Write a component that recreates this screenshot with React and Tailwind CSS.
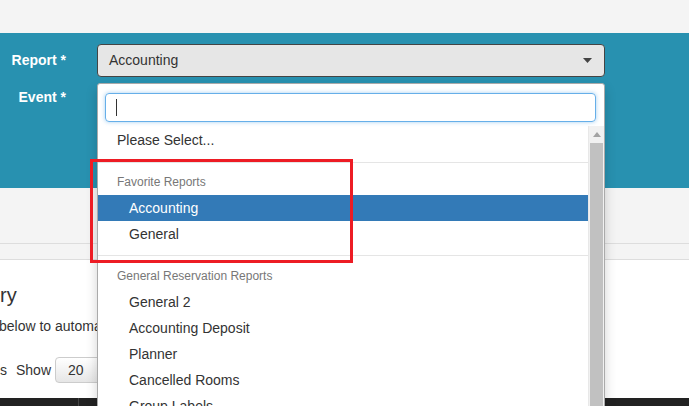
import React from 'react';

const FAVORITES = ['Accounting', 'General'];
const GENERAL = ['General 2', 'Accounting Deposit', 'Planner', 'Cancelled Rooms', 'Group Labels'];

function Caret({ className }) {
  return (
    <svg width="9" height="5" viewBox="0 0 9 5" className={className}>
      <path d="M0 0h9L4.5 5z" fill="currentColor" />
    </svg>
  );
}

function Dropdown() {
  return (
    <div className="absolute left-[97px] top-[83px] w-[508px] h-[340px] bg-white border border-[#aaa] rounded-t-[3px] shadow-[0_6px_12px_rgba(0,0,0,0.18)] flex flex-col">
      <div className="pt-[9px] pl-[7px] pr-[8px]">
        <div className="h-[29px] rounded-[4px] border border-[#66afe9] shadow-[0_0_4px_rgba(102,175,233,0.6)] flex items-center pl-[10px]">
          <span className="w-px h-[17px] bg-[#333]" />
        </div>
      </div>
      <div className="mt-[4px] flex flex-1 min-h-0">
        <ul className="flex-1 overflow-hidden pt-[1px]">
          <li className="h-[26px] leading-[26px] pl-[19px] mb-[9px]">Please Select...</li>
          <li className="border-t border-[#e5e5e5] pt-[7px] pb-[8px]">
            <div className="h-[25px] leading-[25px] pl-[19px] text-[12px] text-[#777]">Favorite Reports</div>
            {FAVORITES.map((r, i) => (
              <div
                key={r}
                className={`h-[26px] leading-[26px] pl-[31px] ${i === 0 ? 'bg-[#337ab7] text-white' : ''}`}
              >
                {r}
              </div>
            ))}
          </li>
          <li className="border-t border-[#e5e5e5] pt-[8px]">
            <div className="h-[25px] leading-[25px] pl-[19px] text-[12px] text-[#777]">General Reservation Reports</div>
            {GENERAL.map((r) => (
              <div key={r} className="h-[26px] leading-[26px] pl-[31px]">{r}</div>
            ))}
          </li>
        </ul>
        <div className="w-[16px] bg-[#f1f1f1] flex flex-col items-center border-l border-[#e8e8e8]">
          <div className="h-[17px] flex items-center justify-center">
            <svg width="8" height="5" viewBox="0 0 8 5"><path d="M4 0l4 5H0z" fill="#a3a3a3" /></svg>
          </div>
          <div className="w-[13px] flex-1 bg-[#c1c1c1]" />
        </div>
      </div>
    </div>
  );
}

export default function App() {
  return (
    <div className="relative w-[689px] h-[406px] overflow-hidden bg-white font-['Liberation_Sans',Arial,sans-serif] text-[14px] text-[#333]">
      <div className="h-[33px] bg-[#f4f4f4]" />

      <div className="h-[155px] bg-[#2891b0] pt-[11px]">
        <div className="flex items-center">
          <label className="w-[66px] text-right font-bold text-white">Report *</label>
          <div className="ml-[31px] w-[508px] h-[33px] rounded-[4px] border border-[#444] bg-[#e6e6e6] flex items-center justify-between pl-[11px] pr-[12px]">
            <span>Accounting</span>
            <Caret className="text-[#444]" />
          </div>
        </div>
        <div className="flex mt-[10px]">
          <label className="w-[66px] text-right font-bold text-white leading-[20px]">Event *</label>
        </div>
      </div>

      <div className="h-[55px] bg-[#f4f4f4]" />
      <div className="h-[17px] bg-[#f4f4f4] border-t border-[#2e8bab] border-b border-[#ddd]" />

      <div className="h-[138px] pt-[23px] whitespace-nowrap">
        <div className="text-[20px] leading-[24px]">ry</div>
        <div className="mt-[9px] leading-[20px] -ml-px">below to automa</div>
        <div className="mt-[21px] flex items-center">
          <span>s</span>
          <span className="ml-[9px]">Show</span>
          <div className="ml-[4px] h-[26px] w-[60px] rounded-[4px] border border-[#ccc] bg-gradient-to-b from-[#fff] to-[#e6e6e6] pl-[12px] leading-[24px]">20</div>
        </div>
      </div>

      <div className="h-[8px] bg-[#222] flex">
        <div className="w-[79px] border-r border-[#444]" />
      </div>

      <Dropdown />

      <div className="absolute left-[90px] top-[159px] w-[263px] h-[104px] border-[3px] border-[#ed1c24]" />
    </div>
  );
}
